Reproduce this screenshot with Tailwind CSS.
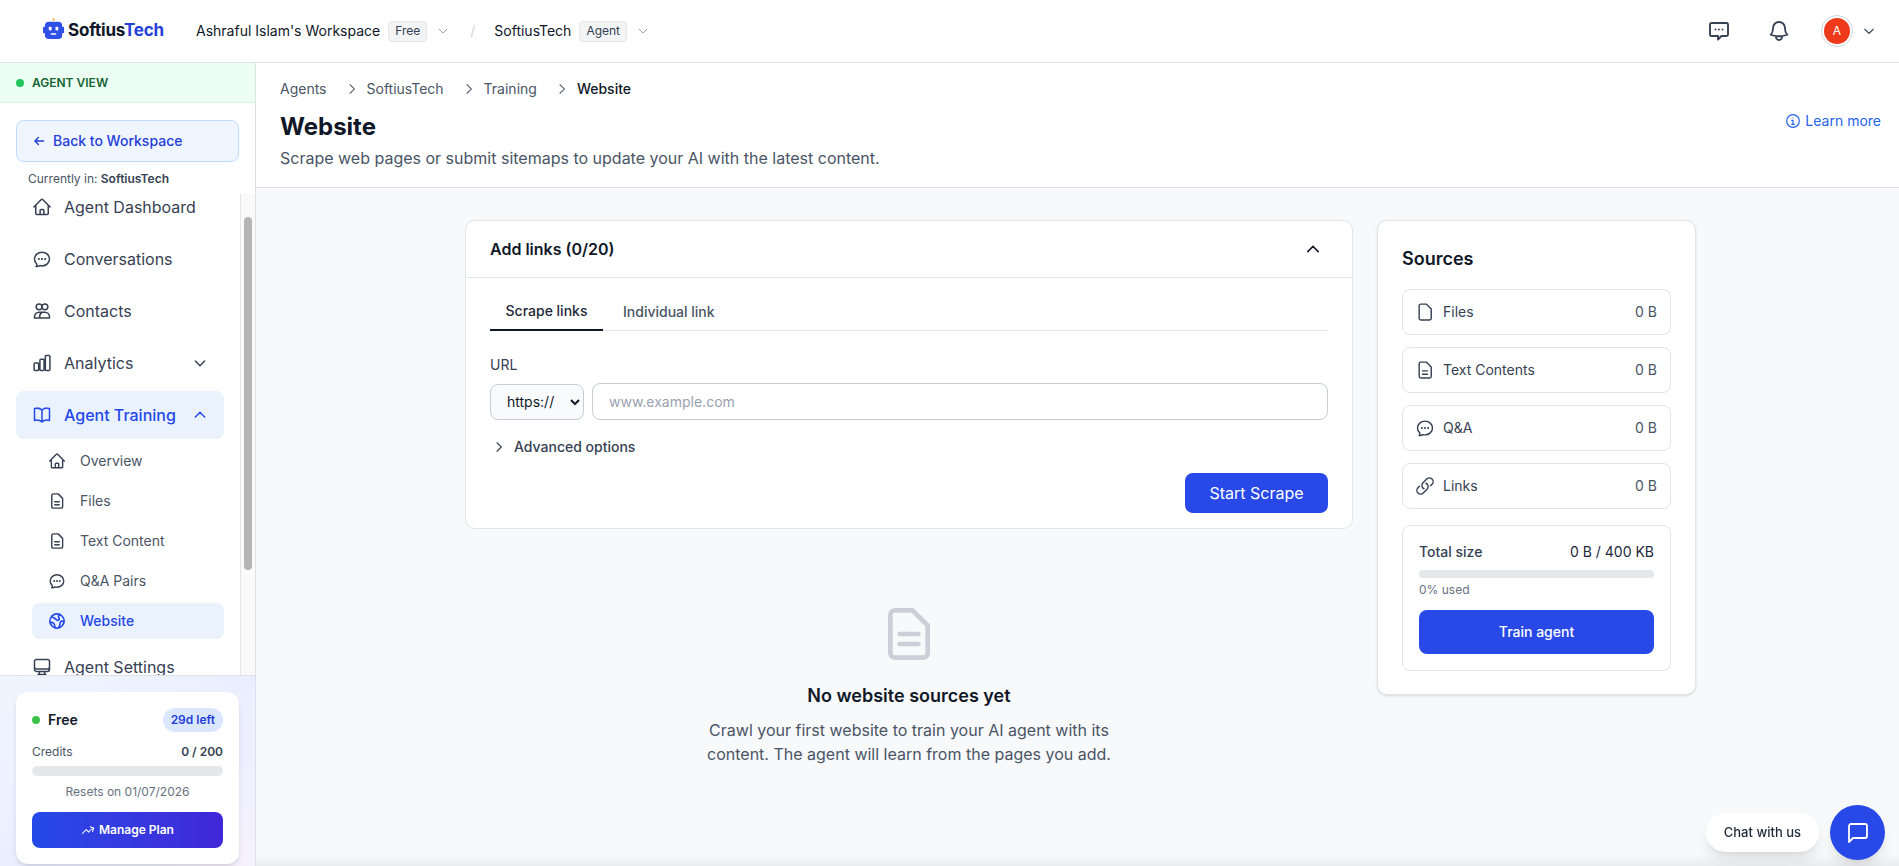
<!DOCTYPE html>
<html lang="en">
<head>
  <meta charset="UTF-8" />
  <meta name="viewport" content="width=device-width, initial-scale=1" />
  <title>Website</title>
  <script src="https://cdn.jsdelivr.net/npm/@tailwindcss/browser@4"></script>
</head>
<body class="h-screen overflow-hidden bg-white font-['Inter',sans-serif] text-gray-900">
  <!-- top bar -->
  <header class="h-[63px] border-b border-[#dfe1e8] flex items-center bg-white">
    <div class="flex items-center ml-[43px] w-[153px]">
      <svg class="w-[23px] h-[23px] shrink-0 -mt-[3px]" viewBox="0 0 24 24">
        <circle cx="11" cy="1.600" r="1.200" fill="#f59e0b"/>
        <rect x="0" y="9" width="3" height="7" rx="1.200" fill="#2f4fe6"/>
        <rect x="19" y="9" width="3" height="7" rx="1.200" fill="#2f4fe6"/>
        <rect x="2" y="4" width="18" height="18" rx="4" fill="#2f4fe6"/>
        <rect x="6" y="9" width="3" height="4" rx="1" fill="#fff"/>
        <rect x="13" y="9" width="3" height="4" rx="1" fill="#fff"/>
        <rect x="8" y="16" width="6" height="1.600" rx=".8" fill="#fff"/>
      </svg>
      <span class="ml-[2px] -mt-[1px] text-[17px] font-bold tracking-[-0.2px] whitespace-nowrap">Softius<span class="text-[#2440d8]">Tech</span></span>
    </div>
    <span class="text-sm text-gray-900 whitespace-nowrap">Ashraful Islam's Workspace</span>
    <span class="ml-2 h-[21px] px-[6px] flex items-center rounded border border-gray-200 bg-gray-100 text-xs text-gray-700">Free</span>
    <svg class="ml-[10px] w-[12px] h-[12px] text-gray-400" viewBox="0 0 24 24" fill="none" stroke="currentColor" stroke-width="2"><path d="M4 8l8 8 8-8"/></svg>
    <span class="ml-[21px] text-gray-300 text-sm">/</span>
    <span class="ml-[19px] text-sm text-gray-900">SoftiusTech</span>
    <span class="ml-2 h-[21px] px-[6px] flex items-center rounded border border-gray-200 bg-gray-100 text-xs text-gray-700">Agent</span>
    <svg class="ml-[10px] w-[12px] h-[12px] text-gray-400" viewBox="0 0 24 24" fill="none" stroke="currentColor" stroke-width="2"><path d="M4 8l8 8 8-8"/></svg>
    <div class="ml-auto flex items-center pr-[24px]">
      <svg class="w-6 h-6 text-gray-700" viewBox="0 0 24 24" fill="none" stroke="currentColor" stroke-width="1.900" stroke-linejoin="round"><path d="M4.500 4h15A1.500 1.500 0 0121 5.500v10a1.500 1.500 0 01-1.500 1.500h-5l-3.500 3.500V17h-6A1.500 1.500 0 013 15.500v-10A1.500 1.500 0 014.500 4z"/><path stroke-linecap="round" d="M8.500 10.500h.01M12 10.500h.01M15.500 10.500h.01"/></svg>
      <svg class="ml-[36px] w-6 h-6 text-gray-700" viewBox="0 0 24 24" fill="none" stroke="currentColor" stroke-width="1.800" stroke-linecap="round" stroke-linejoin="round"><path d="M14.857 17.082a23.848 23.848 0 005.454-1.310A8.967 8.967 0 0118 9.750v-.7V9A6 6 0 006 9v.750a8.967 8.967 0 01-2.312 6.022c1.733.640 3.560 1.085 5.455 1.310m5.714 0a24.255 24.255 0 01-5.714 0m5.714 0a3 3 0 11-5.714 0"/></svg>
      <div class="ml-[30px] w-[32px] h-[32px] rounded-full border border-gray-300 flex items-center justify-center">
        <div class="w-[26px] h-[26px] rounded-full bg-[#ee3a1b] text-white text-xs flex items-center justify-center">A</div>
      </div>
      <svg class="ml-[10px] w-[12px] h-[12px] text-gray-700" viewBox="0 0 24 24" fill="none" stroke="currentColor" stroke-width="2.200"><path d="M3 8l9 9 9-9"/></svg>
    </div>
  </header>

  <div class="flex h-[803px]">
    <!-- sidebar -->
    <aside class="w-[256px] shrink-0 border-r border-[#dfe1e8] flex flex-col bg-white">
      <div class="h-[40px] shrink-0 bg-[#ecfdf3] border-b border-[#d5f5e0] flex items-center pl-4 gap-2">
        <span class="w-2 h-2 rounded-full bg-[#22c55e]"></span>
        <span class="text-xs font-semibold text-[#166534]">AGENT VIEW</span>
      </div>
      <div class="shrink-0 h-[91px] px-4 pt-[17px]">
        <button class="w-full h-[42px] rounded-lg border border-[#bfdbfe] bg-[#eff6ff] flex items-center pl-[15px] gap-[7px] text-sm font-medium text-[#2440d8]">
          <svg class="w-[14px] h-[14px]" viewBox="0 0 24 24" fill="none" stroke="currentColor" stroke-width="2.400" stroke-linecap="round" stroke-linejoin="round"><path d="M20 12H5m6-6l-6 6 6 6"/></svg>
          Back to Workspace
        </button>
        <p class="mt-[9px] pl-3 text-[12px] leading-4 text-gray-600">Currently in: <span class="font-semibold text-gray-700">SoftiusTech</span></p>
      </div>
      <div class="flex-1 flex min-h-0">
        <nav class="w-[240px] overflow-hidden px-4">
          <div class="-mt-[11px] flex flex-col gap-1 text-gray-700">
            <a class="h-12 shrink-0 flex items-center gap-3 px-4 text-base">
              <svg class="w-5 h-5 text-gray-700" viewBox="0 0 24 24" fill="none" stroke="currentColor" stroke-width="1.800" stroke-linecap="round" stroke-linejoin="round"><path d="M2.250 12l8.954-8.955c.44-.439 1.152-.439 1.591 0L21.750 12M4.500 9.750v10.125c0 .621.504 1.125 1.125 1.125H9.750v-4.875c0-.621.504-1.125 1.125-1.125h2.250c.621 0 1.125.504 1.125 1.125V21h4.125c.621 0 1.125-.504 1.125-1.125V9.750M8.250 21h8.250"/></svg>
              Agent Dashboard
            </a>
            <a class="h-12 shrink-0 flex items-center gap-3 px-4 text-base">
              <svg class="w-5 h-5" viewBox="0 0 24 24" fill="none" stroke="currentColor" stroke-width="1.800" stroke-linecap="round" stroke-linejoin="round"><path d="M8.625 12a.375.375 0 11-.75 0 .375.375 0 01.75 0zm0 0H8.250m4.125 0a.375.375 0 11-.75 0 .375.375 0 01.75 0zm0 0H12m4.125 0a.375.375 0 11-.75 0 .375.375 0 01.75 0zm0 0h-.375M21 12c0 4.556-4.030 8.250-9 8.250a9.764 9.764 0 01-2.555-.337A5.972 5.972 0 015.410 20.970a5.969 5.969 0 01-.474-.065 4.480 4.480 0 00.978-2.025c.090-.457-.133-.901-.467-1.226C3.930 16.178 3 14.189 3 12c0-4.556 4.030-8.250 9-8.250s9 3.694 9 8.250z"/></svg>
              Conversations
            </a>
            <a class="h-12 shrink-0 flex items-center gap-3 px-4 text-base">
              <svg class="w-5 h-5" viewBox="0 0 24 24" fill="none" stroke="currentColor" stroke-width="1.800" stroke-linecap="round" stroke-linejoin="round"><circle cx="8.500" cy="7" r="3.500"/><circle cx="15.500" cy="7" r="3.500"/><path d="M3 20.500v-1.500a5.500 5.500 0 015.500-5.500h7a5.500 5.500 0 015.500 5.500v1.500zM12 13.500c-2 1.200-3 3.500-3 7"/></svg>
              Contacts
            </a>
            <a class="h-12 shrink-0 flex items-center gap-3 px-4 text-base">
              <svg class="w-5 h-5" viewBox="0 0 24 24" fill="none" stroke="currentColor" stroke-width="1.800" stroke-linecap="round" stroke-linejoin="round"><path d="M2.500 13.125C2.500 12.504 3.004 12 3.625 12h3.250c.621 0 1.125.504 1.125 1.125v6.750C8 20.496 7.496 21 6.875 21h-3.250A1.125 1.125 0 012.500 19.875v-6.750zM9.500 8.625c0-.621.504-1.125 1.125-1.125h2.750c.621 0 1.125.504 1.125 1.125v11.250c0 .621-.504 1.125-1.125 1.125h-2.750A1.125 1.125 0 019.500 19.875V8.625zM16 4.125C16 3.504 16.504 3 17.125 3h3.250c.621 0 1.125.504 1.125 1.125v15.750c0 .621-.504 1.125-1.125 1.125h-3.250A1.125 1.125 0 0116 19.875V4.125z"/></svg>
              Analytics
              <svg class="ml-auto w-4 h-4" viewBox="0 0 24 24" fill="none" stroke="currentColor" stroke-width="2.200" stroke-linecap="round" stroke-linejoin="round"><path d="M5 9l7 7 7-7"/></svg>
            </a>
            <a class="h-12 shrink-0 flex items-center gap-3 px-4 text-base font-medium rounded-lg bg-[#eaf2fe] text-[#2449e8]">
              <svg class="w-5 h-5" viewBox="0 0 24 24" fill="none" stroke="currentColor" stroke-width="1.800" stroke-linecap="round" stroke-linejoin="round"><path d="M12 6.042A8.967 8.967 0 006 3.750c-1.052 0-2.062.180-3 .512v14.250A8.987 8.987 0 016 18c2.305 0 4.408.867 6 2.292m0-14.250a8.966 8.966 0 016-2.292c1.052 0 2.062.180 3 .512v14.250A8.987 8.987 0 0018 18a8.967 8.967 0 00-6 2.292m0-14.250v14.250"/></svg>
              Agent Training
              <svg class="ml-auto w-4 h-4" viewBox="0 0 24 24" fill="none" stroke="currentColor" stroke-width="2.200" stroke-linecap="round" stroke-linejoin="round"><path d="M5 15l7-7 7 7"/></svg>
            </a>
            <a class="h-9 shrink-0 flex items-center gap-[14px] ml-4 px-4 text-sm text-gray-600">
              <svg class="w-[18px] h-[18px] text-gray-700" viewBox="0 0 24 24" fill="none" stroke="currentColor" stroke-width="1.900" stroke-linecap="round" stroke-linejoin="round"><path d="M2.250 12l8.954-8.955c.44-.439 1.152-.439 1.591 0L21.750 12M4.500 9.750v10.125c0 .621.504 1.125 1.125 1.125H9.750v-4.875c0-.621.504-1.125 1.125-1.125h2.250c.621 0 1.125.504 1.125 1.125V21h4.125c.621 0 1.125-.504 1.125-1.125V9.750M8.250 21h8.250"/></svg>
              Overview
            </a>
            <a class="h-9 shrink-0 flex items-center gap-[14px] ml-4 px-4 text-sm text-gray-600">
              <svg class="w-[18px] h-[18px] text-gray-700" viewBox="0 0 24 24" fill="none" stroke="currentColor" stroke-width="1.900" stroke-linecap="round" stroke-linejoin="round"><path d="M7 2.500h6.500l6 6V19.500a2 2 0 01-2 2H7a2 2 0 01-2-2v-15a2 2 0 012-2zM9 13h6M9 17h6"/></svg>
              Files
            </a>
            <a class="h-9 shrink-0 flex items-center gap-[14px] ml-4 px-4 text-sm text-gray-600">
              <svg class="w-[18px] h-[18px] text-gray-700" viewBox="0 0 24 24" fill="none" stroke="currentColor" stroke-width="1.900" stroke-linecap="round" stroke-linejoin="round"><path d="M7 2.500h6.500l6 6V19.500a2 2 0 01-2 2H7a2 2 0 01-2-2v-15a2 2 0 012-2zM9 13h6M9 17h6"/></svg>
              Text Content
            </a>
            <a class="h-9 shrink-0 flex items-center gap-[14px] ml-4 px-4 text-sm text-gray-600">
              <svg class="w-[18px] h-[18px] text-gray-700" viewBox="0 0 24 24" fill="none" stroke="currentColor" stroke-width="1.900" stroke-linecap="round" stroke-linejoin="round"><path d="M8.625 12a.375.375 0 11-.75 0 .375.375 0 01.75 0zm0 0H8.250m4.125 0a.375.375 0 11-.75 0 .375.375 0 01.75 0zm0 0H12m4.125 0a.375.375 0 11-.75 0 .375.375 0 01.75 0zm0 0h-.375M21 12c0 4.556-4.030 8.250-9 8.250a9.764 9.764 0 01-2.555-.337A5.972 5.972 0 015.410 20.970a5.969 5.969 0 01-.474-.065 4.480 4.480 0 00.978-2.025c.090-.457-.133-.901-.467-1.226C3.930 16.178 3 14.189 3 12c0-4.556 4.030-8.250 9-8.250s9 3.694 9 8.250z"/></svg>
              Q&amp;A Pairs
            </a>
            <a class="h-9 shrink-0 flex items-center gap-[14px] ml-4 px-4 text-sm font-medium rounded-lg bg-[#eaf2fe] text-[#2449e8]">
              <svg class="w-[18px] h-[18px]" viewBox="0 0 24 24" fill="none" stroke="currentColor" stroke-width="2.200" stroke-linecap="round" stroke-linejoin="round"><circle cx="12" cy="12" r="9.500"/><path d="M5 5.500c1 2 2.500 2.500 4 3s1.500 2 3 2.500 3-.5 3-2-1.500-2-1-3.500 2-2 2-2M21 13c-1.500-1-3.500-1-4.500.5s0 3-1 4.500-1 2.500-1 3M3 14c2-.5 4 0 5 1.500s1 3.500 1.500 5.500"/></svg>
              Website
            </a>
            <a class="h-12 shrink-0 flex items-center gap-3 px-4 text-base">
              <svg class="w-5 h-5" viewBox="0 0 24 24" fill="none" stroke="currentColor" stroke-width="1.800" stroke-linecap="round" stroke-linejoin="round"><path d="M9 17.250v1.007a3 3 0 01-.879 2.122L7.500 21h9l-.621-.621A3 3 0 0115 18.257V17.250m6-12V15a2.250 2.250 0 01-2.250 2.250H5.250A2.250 2.250 0 013 15V5.250m18 0A2.250 2.250 0 0018.750 3H5.250A2.250 2.250 0 003 5.250m18 0V12a2.250 2.250 0 01-2.250 2.250H5.250A2.250 2.250 0 013 12V5.250"/></svg>
              Agent Settings
            </a>
          </div>
        </nav>
        <div class="w-[15px] border-l border-[#e5e5e5] bg-[#fafafa] pl-[3px]">
          <div class="mt-[23px] w-2 h-[353px] rounded-full bg-[#b5b5b5]"></div>
        </div>
      </div>
      <!-- plan card -->
      <div class="shrink-0 h-[191px] border-t border-[#dfe1e8] bg-gradient-to-br from-[#eff6ff] via-[#eaefff] to-[#f6f1fe] px-4 pt-[16px]">
        <div class="h-[172px] rounded-xl bg-white shadow-md px-4 pt-4">
          <div class="flex items-center h-6">
            <span class="w-2 h-2 rounded-full bg-[#3cc24c]"></span>
            <span class="ml-2 text-sm font-semibold">Free</span>
            <span class="ml-auto h-6 px-2 flex items-center rounded-full bg-[#dbe7fe] text-xs font-semibold text-[#2440d8]">29d left</span>
          </div>
          <div class="mt-[8px] flex justify-between text-xs leading-6 text-gray-600">
            <span>Credits</span><span class="font-semibold text-gray-700">0 / 200</span>
          </div>
          <div class="mt-[2px] h-[10px] rounded-full bg-gray-200"></div>
          <p class="mt-[8px] text-center text-xs leading-4 text-gray-500">Resets on 01/07/2026</p>
          <button class="mt-[12px] w-full h-9 rounded-lg bg-gradient-to-r from-[#2449e8] to-[#4027d8] flex items-center justify-center gap-1 text-xs font-semibold text-white">
            <svg class="w-[14px] h-[14px]" viewBox="0 0 24 24" fill="none" stroke="currentColor" stroke-width="1.800" stroke-linecap="round" stroke-linejoin="round"><path d="M2.250 18L9 11.250l4.306 4.307a11.950 11.950 0 015.814-5.519l2.740-1.220m0 0l-5.940-2.280m5.940 2.280l-2.280 5.941"/></svg>
            Manage Plan
          </button>
        </div>
      </div>
    </aside>

    <!-- main -->
    <main class="flex-1 min-w-0 flex flex-col bg-[#f8f9fb]">
      <div class="h-[125px] shrink-0 bg-white border-b border-[#dfe1e8] px-[24px] pt-[16px] relative">
        <div class="flex items-center h-5 text-sm text-gray-600">
          <span>Agents</span>
          <svg class="ml-[18px] mr-[8px] w-[14px] h-[14px]" viewBox="0 0 24 24" fill="none" stroke="currentColor" stroke-width="1.800"><path d="M8 4l8 8-8 8"/></svg>
          <span>SoftiusTech</span>
          <svg class="ml-[18px] mr-[8px] w-[14px] h-[14px]" viewBox="0 0 24 24" fill="none" stroke="currentColor" stroke-width="1.800"><path d="M8 4l8 8-8 8"/></svg>
          <span>Training</span>
          <svg class="ml-[18px] mr-[8px] w-[14px] h-[14px]" viewBox="0 0 24 24" fill="none" stroke="currentColor" stroke-width="1.800"><path d="M8 4l8 8-8 8"/></svg>
          <span class="font-medium text-gray-900">Website</span>
        </div>
        <h1 class="mt-[12px] text-2xl leading-8 font-bold">Website</h1>
        <p class="mt-[3px] text-base leading-6 text-gray-600">Scrape web pages or submit sitemaps to update your AI with the latest content.</p>
        <a class="absolute right-[18px] top-[48px] flex items-center gap-[4px] text-sm text-[#2563eb]">
          <svg class="w-4 h-4" viewBox="0 0 24 24" fill="none" stroke="currentColor" stroke-width="1.800" stroke-linecap="round"><circle cx="12" cy="12" r="9.500"/><path d="M12 11v6M10 11h2M10 17h4M12 7.500h.01"/></svg>
          Learn more
        </a>
      </div>

      <div class="flex-1 min-h-0 pl-[209px] pt-[32px] flex items-start gap-[24px] relative">
        <div class="w-[888px] shrink-0">
          <section class="h-[309px] bg-white border border-[#e2e4ea] rounded-[10px]">
            <div class="h-[57px] border-b border-[#e2e4ea] flex items-center justify-between px-6">
              <h2 class="text-base font-semibold">Add links (0/20)</h2>
              <svg class="mr-[6px] w-[18px] h-[18px] text-gray-900" viewBox="0 0 24 24" fill="none" stroke="currentColor" stroke-width="2" stroke-linecap="round" stroke-linejoin="round"><path d="M5 15.500l7-7 7 7"/></svg>
            </div>
            <div class="px-6">
              <div class="mt-[16px] h-[37px] flex border-b border-[#e2e4ea] text-sm font-medium">
                <span class="w-[113px] h-[37px] border-b-2 border-gray-900 flex items-center justify-center pb-[2px] text-gray-800">Scrape links</span>
                <span class="ml-[20px] h-[37px] flex items-center pb-[2px] text-gray-600">Individual link</span>
              </div>
              <label class="block mt-[24px] text-sm leading-5 text-gray-700">URL</label>
              <div class="mt-[8px] flex gap-[8px] items-center">
                <select class="w-[94px] h-[36px] pl-[12px] rounded-lg border border-[#c9ccd4] bg-gray-50 text-sm text-gray-900"><option>https://</option></select>
                <input class="flex-1 h-[37px] px-4 rounded-lg border border-[#c9ccd4] text-sm placeholder:text-gray-400" placeholder="www.example.com" />
              </div>
              <div class="mt-[17px] h-5 flex items-center text-sm font-medium text-gray-700">
                <svg class="ml-[2px] w-[14px] h-[14px]" viewBox="0 0 24 24" fill="none" stroke="currentColor" stroke-width="2.200"><path d="M8 4l8 8-8 8"/></svg>
                <span class="ml-[8px]">Advanced options</span>
              </div>
              <div class="mt-[16px] flex justify-end">
                <button class="w-[143px] h-[40px] rounded-lg bg-[#2849e8] text-white text-base">Start Scrape</button>
              </div>
            </div>
          </section>
          <div class="mt-[77px] flex flex-col items-center">
            <svg class="w-[56px] h-[56px] text-[#cbd0d8]" viewBox="0 0 24 24" fill="none" stroke="currentColor" stroke-width="2" stroke-linecap="round" stroke-linejoin="round"><path d="M6 1.850h7.500l6.500 6.500V20.150a2 2 0 01-2 2H6a2 2 0 01-2-2V3.850a2 2 0 012-2zM8 12h8M8 16.300h8"/></svg>
            <h3 class="mt-[20px] text-lg leading-7 font-semibold">No website sources yet</h3>
            <p class="mt-[8px] w-[420px] text-center text-base leading-6 text-gray-600">Crawl your first website to train your AI agent with its content. The agent will learn from the pages you add.</p>
          </div>
        </div>

        <section class="w-[319px] shrink-0 h-[475px] bg-white border border-[#e2e4ea] rounded-[10px] shadow-sm px-[24px] pt-[24px]">
          <h2 class="text-lg leading-7 font-semibold">Sources</h2>
          <div class="mt-[16px] flex flex-col gap-3">
            <div class="h-[46px] rounded-lg border border-[#e2e4ea] flex items-center pl-[12px] pr-[13px] text-sm text-gray-700">
              <svg class="w-5 h-5" viewBox="0 0 24 24" fill="none" stroke="currentColor" stroke-width="1.700" stroke-linecap="round" stroke-linejoin="round"><path d="M7 2.500h6.500l6 6V19.500a2 2 0 01-2 2H7a2 2 0 01-2-2v-15a2 2 0 012-2z"/></svg>
              <span class="ml-2">Files</span><span class="ml-auto text-gray-600">0 B</span>
            </div>
            <div class="h-[46px] rounded-lg border border-[#e2e4ea] flex items-center pl-[12px] pr-[13px] text-sm text-gray-700">
              <svg class="w-5 h-5" viewBox="0 0 24 24" fill="none" stroke="currentColor" stroke-width="1.700" stroke-linecap="round" stroke-linejoin="round"><path d="M7 2.500h6.500l6 6V19.500a2 2 0 01-2 2H7a2 2 0 01-2-2v-15a2 2 0 012-2zM9 13h6M9 17h6"/></svg>
              <span class="ml-2">Text Contents</span><span class="ml-auto text-gray-600">0 B</span>
            </div>
            <div class="h-[46px] rounded-lg border border-[#e2e4ea] flex items-center pl-[12px] pr-[13px] text-sm text-gray-700">
              <svg class="w-5 h-5" viewBox="0 0 24 24" fill="none" stroke="currentColor" stroke-width="1.700" stroke-linecap="round" stroke-linejoin="round"><path d="M8.625 12a.375.375 0 11-.75 0 .375.375 0 01.75 0zm0 0H8.250m4.125 0a.375.375 0 11-.75 0 .375.375 0 01.75 0zm0 0H12m4.125 0a.375.375 0 11-.75 0 .375.375 0 01.75 0zm0 0h-.375M21 12c0 4.556-4.030 8.250-9 8.250a9.764 9.764 0 01-2.555-.337A5.972 5.972 0 015.410 20.970a5.969 5.969 0 01-.474-.065 4.480 4.480 0 00.978-2.025c.090-.457-.133-.901-.467-1.226C3.930 16.178 3 14.189 3 12c0-4.556 4.030-8.250 9-8.250s9 3.694 9 8.250z"/></svg>
              <span class="ml-2">Q&amp;A</span><span class="ml-auto text-gray-600">0 B</span>
            </div>
            <div class="h-[46px] rounded-lg border border-[#e2e4ea] flex items-center pl-[12px] pr-[13px] text-sm text-gray-700">
              <svg class="w-5 h-5" viewBox="0 0 24 24" fill="none" stroke="currentColor" stroke-width="1.700" stroke-linecap="round" stroke-linejoin="round"><path d="M13.190 8.688a4.500 4.500 0 011.242 7.244l-4.500 4.500a4.500 4.500 0 01-6.364-6.364l1.757-1.757m13.350-.622l1.757-1.757a4.500 4.500 0 00-6.364-6.364l-4.500 4.500a4.500 4.500 0 001.242 7.244"/></svg>
              <span class="ml-2">Links</span><span class="ml-auto text-gray-600">0 B</span>
            </div>
          </div>
          <div class="mt-[16px] h-[146px] rounded-lg border border-[#e2e4ea] px-4 pt-[16px]">
            <div class="flex justify-between text-sm leading-5">
              <span class="font-medium text-gray-700">Total size</span><span class="text-gray-800">0 B / 400 KB</span>
            </div>
            <div class="mt-[8px] h-2 rounded-full bg-gray-200"></div>
            <p class="mt-[4px] text-xs leading-4 text-gray-500">0% used</p>
            <button class="mt-[12px] w-full h-[44px] rounded-lg bg-[#2849e8] text-white text-sm font-medium">Train agent</button>
          </div>
        </section>

        <!-- bottom edge shade -->
        <div class="absolute left-0 right-0 bottom-0 h-[12px] bg-gradient-to-t from-black/5 to-transparent"></div>
      </div>
    </main>
  </div>

  <!-- chat launcher -->
  <div class="fixed right-[14px] bottom-[6px] flex items-center gap-[11px]">
    <span class="h-[39px] px-[18px] flex items-center rounded-full bg-white shadow-lg text-[13px] font-medium text-gray-800">Chat with us</span>
    <button class="w-[55px] h-[55px] rounded-full bg-[#2849e8] flex items-center justify-center shadow-lg">
      <svg class="w-6 h-6 text-white" viewBox="0 0 24 24" fill="none" stroke="currentColor" stroke-width="1.800" stroke-linejoin="round"><path d="M21 15a2 2 0 01-2 2H7l-4 4V5a2 2 0 012-2h14a2 2 0 012 2z"/></svg>
    </button>
  </div>
</body>
</html>
